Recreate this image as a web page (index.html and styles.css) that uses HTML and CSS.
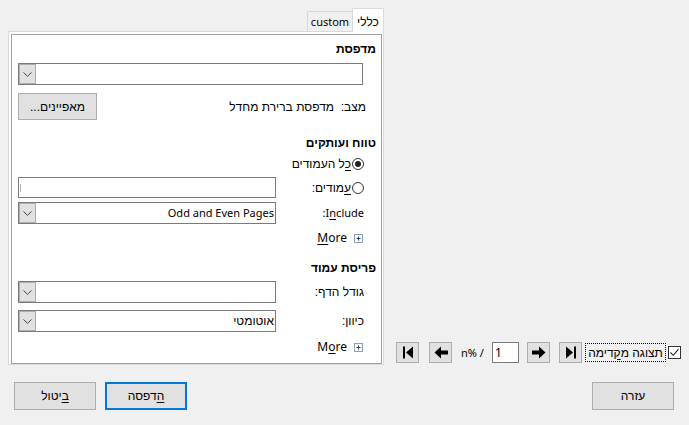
FILE: index.html
```html
<!DOCTYPE html>
<html lang="he" dir="rtl">
<head>
<meta charset="utf-8">
<title>הדפסה</title>
<link rel="stylesheet" href="styles.css">
</head>
<body>
<div class="dialog">
  <div class="main">
    <div class="preview">
      <span class="checkbox"><svg width="11" height="11" viewBox="0 0 11 11"><polyline points="1.5,5.5 4.3,8.3 9.5,2.2" fill="none" stroke="#222" stroke-width="1.1"/></svg></span>
      <span class="chk-label">תצוגה מ<u>ק</u>דימה</span>
      <span class="nav nav-last"><svg width="12" height="13" viewBox="0 0 12 13"><polygon points="1,0.5 8,6.5 1,12.5" fill="#000"/><rect x="9" y="0.5" width="2" height="12" fill="#000"/></svg></span>
      <span class="nav nav-next"><svg width="14" height="13" viewBox="0 0 14 13"><polygon points="0,4.5 7,4.5 7,0.5 13.5,6.5 7,12.5 7,8.5 0,8.5" fill="#000"/></svg></span>
      <span class="pagein lat">1</span>
      <span class="pagetotal lat" dir="ltr">n% /</span>
      <span class="nav nav-prev"><svg width="14" height="13" viewBox="0 0 14 13"><polygon points="14,4.5 7,4.5 7,0.5 0.5,6.5 7,12.5 7,8.5 14,8.5" fill="#000"/></svg></span>
      <span class="nav nav-first"><svg width="12" height="13" viewBox="0 0 12 13"><rect x="1" y="0.5" width="2" height="12" fill="#000"/><polygon points="11,0.5 4,6.5 11,12.5" fill="#000"/></svg></span>
    </div>
    <div class="tabs">
      <div class="tabbar">
        <div class="tab tab-active">כללי</div>
        <div class="tab tab-other lat">custom</div>
      </div>
      <div class="panel">
        <div class="frame">
          <div class="heading">מדפסת</div>
          <div class="combo combo-printer">
            <span class="combo-text"></span>
            <span class="drop"><svg width="9" height="5" viewBox="0 0 9 5"><polyline points="0.5,0.5 4.5,4.3 8.5,0.5" fill="none" stroke="#444" stroke-width="1"/></svg></span>
          </div>
          <div class="row status-row">
            <span class="status-text">מצב:&nbsp; מדפסת ברירת מחדל</span>
            <span class="btn btn-props">מאפיינים...</span>
          </div>
          <div class="heading heading-range">טווח ועותקים</div>
          <div class="indent">
            <div class="row radio-row radio-all">
              <span class="radio-wrap"><span class="radio radio-on"></span><span class="radio-text"><u>כ</u>ל העמודים</span></span>
            </div>
            <div class="row radio-row radio-pages">
              <span class="radio-wrap"><span class="radio"></span><span class="radio-text"><u>ע</u>מודים:</span></span>
              <span class="textbox"><span class="caret"></span></span>
            </div>
            <div class="row include-row">
              <span class="label lat">I<u>n</u>clude:</span>
              <span class="combo combo-short">
                <span class="combo-text lat"><span dir="ltr">Odd and Even Pages</span></span>
                <span class="drop"><svg width="9" height="5" viewBox="0 0 9 5"><polyline points="0.5,0.5 4.5,4.3 8.5,0.5" fill="none" stroke="#444" stroke-width="1"/></svg></span>
              </span>
            </div>
            <div class="row more-row more-1">
              <span class="expander"><svg width="9" height="9" viewBox="0 0 9 9"><rect x="0.5" y="0.5" width="8" height="8" fill="#fff" stroke="#8d9db4"/><path d="M4.5 2.5v4M2.5 4.5h4" stroke="#1f3f7a" stroke-width="1"/></svg></span>
              <span class="more-text lat" dir="ltr"><u>M</u>ore</span>
            </div>
          </div>
          <div class="heading heading-layout">פריסת עמוד</div>
          <div class="indent">
            <div class="row size-row">
              <span class="label">גודל הדף:</span>
              <span class="combo combo-short">
                <span class="combo-text"></span>
                <span class="drop"><svg width="9" height="5" viewBox="0 0 9 5"><polyline points="0.5,0.5 4.5,4.3 8.5,0.5" fill="none" stroke="#444" stroke-width="1"/></svg></span>
              </span>
            </div>
            <div class="row orient-row">
              <span class="label">כיוון:</span>
              <span class="combo combo-short">
                <span class="combo-text">אוטומטי</span>
                <span class="drop"><svg width="9" height="5" viewBox="0 0 9 5"><polyline points="0.5,0.5 4.5,4.3 8.5,0.5" fill="none" stroke="#444" stroke-width="1"/></svg></span>
              </span>
            </div>
            <div class="row more-row more-2">
              <span class="expander"><svg width="9" height="9" viewBox="0 0 9 9"><rect x="0.5" y="0.5" width="8" height="8" fill="#fff" stroke="#8d9db4"/><path d="M4.5 2.5v4M2.5 4.5h4" stroke="#1f3f7a" stroke-width="1"/></svg></span>
              <span class="more-text lat" dir="ltr">M<u>o</u>re</span>
            </div>
          </div>
        </div>
      </div>
    </div>
  </div>
  <div class="buttons">
    <span class="btn btn-big">עזרה</span>
    <span class="btn-group">
      <span class="btn btn-big btn-default"><u>ה</u>דפסה</span>
      <span class="btn btn-big"><u>ב</u>יטול</span>
    </span>
  </div>
</div>
</body>
</html>
```

FILE: styles.css
```css
* { box-sizing: border-box; }
html, body { margin: 0; padding: 0; }
body {
  background: #f0f0f0;
  font-family: "Liberation Sans", "DejaVu Sans", sans-serif;
  font-size: 12px;
  color: #000;
  width: 689px;
  height: 425px;
  overflow: hidden;
}
.lat { font-family: "Noto Sans", "Liberation Sans", sans-serif; font-size: 11px; }
u { text-decoration: underline; text-underline-offset: 2px; }

.dialog { display: flex; flex-direction: column; height: 425px; }

.main {
  display: flex;
  align-items: flex-end;
  padding: 8px 8px 0 8px;
  height: 365px;
}

/* preview navigation */
.preview {
  display: flex;
  align-items: center;
  margin-bottom: 2px;
  height: 21px;
}
.checkbox {
  width: 13px; height: 13px;
  border: 1px solid #333;
  background: #fff;
  display: flex; align-items: center; justify-content: center;
}
.chk-label {
  margin-right: 2px;
  border: 1px dotted #000;
  height: 19px;
  width: 81px;
  line-height: 16px;
  display: flex; align-items: center; justify-content: center;
}
.nav {
  width: 23px; height: 21px;
  background: #e1e1e1;
  border: 1px solid #adadad;
  display: flex; align-items: center; justify-content: center;
}
.nav-last { margin-right: 3px; }
.nav-next { margin-right: 9px; }
.pagein {
  margin-right: 8px;
  width: 27px; height: 21px;
  background: #fff;
  border: 1px solid #7a7a7a;
  direction: ltr;
  text-align: left;
  padding-left: 2px;
  line-height: 19px;
  font-size: 12px;
}
.pagetotal { margin-right: 6px; width: 25px; line-height: 16px; }
.nav-prev { margin-right: 9px; }
.nav-first { margin-right: 10px; }

/* tabs */
.tabs { margin-right: auto; width: 376px; }
.tabbar { display: flex; align-items: flex-end; height: 23px; }
.tab {
  border: 1px solid #d9d9d9;
  border-bottom: none;
  line-height: 16px;
  text-align: center;
}
.tab-active {
  width: 32px;
  height: 24px;
  margin-bottom: -1px;
  background: #fff;
  position: relative;
  z-index: 1;
  padding-top: 5px;
}
.tab-other {
  width: 45px;
  height: 20px;
  background: #f0f0f0;
  border-left: 1px solid #d9d9d9;
  border-right: none;
  padding-top: 2px;
}
.panel {
  border: 1px solid #d9d9d9;
  background: #fff;
  height: 334px;
  padding: 2px 1px 0 2px;
}
.frame {
  border: 1px solid #a0a0a0;
  height: 330px;
  padding: 6px 5px 0 6px;
}

.heading {
  font-weight: bold;
  line-height: 16px;
}
.heading-range { margin-top: 15px; }
.heading-layout { margin-top: 14px; }

.row {
  display: flex;
  align-items: center;
  justify-content: space-between;
}
.indent { margin-right: 12px; }

.combo {
  display: flex;
  height: 22px;
  border: 1px solid #7a7a7a;
  background: #fff;
}
.combo-printer { margin-top: 6px; margin-left: 0; margin-right: 13px; }
.combo-short { width: 258px; }
.combo-text {
  flex: 1;
  line-height: 20px;
  padding-right: 1px;
  white-space: nowrap;
  text-align: right;
}
.drop {
  width: 17px;
  background: #e1e1e1;
  border: 1px solid #adadad;
  margin: 0;
  display: flex; align-items: center; justify-content: center;
}

.btn {
  background: #e1e1e1;
  border: 1px solid #adadad;
  display: flex; align-items: center; justify-content: center;
}
.status-row { margin-top: 8px; height: 27px; margin-right: 10px; }
.btn-props { width: 79px; height: 27px; }

.radio-row { height: 16px; }
.radio-all { margin-top: 5px; }
.radio-pages { margin-top: 5px; height: 21px; }
.radio-wrap { display: flex; align-items: center; }
.radio {
  width: 12px; height: 12px;
  border: 1px solid #333;
  border-radius: 50%;
  background: #fff;
  display: flex; align-items: center; justify-content: center;
}
.radio-on::after {
  content: "";
  width: 6px; height: 6px;
  border-radius: 50%;
  background: #222;
}
.radio-text { margin-right: 1px; line-height: 16px; }
.textbox {
  width: 258px; height: 21px;
  border: 1px solid #7a7a7a;
  background: #fff;
  display: flex;
  align-items: center;
  justify-content: flex-end;
}
.caret { width: 1px; height: 8px; background: #b0b0b0; margin-left: 1px; }

.include-row { margin-top: 4px; height: 22px; }
.label { line-height: 16px; }

.more-row { margin-top: 6px; height: 16px; justify-content: flex-start; }
.more-2 { margin-top: 7px; }
.expander { display: flex; margin-right: 1px; }
.more-text { margin-right: 7px; line-height: 16px; font-size: 12px; }

.size-row { margin-top: 5px; height: 22px; }
.orient-row { margin-top: 7px; height: 22px; }

/* bottom buttons */
.buttons {
  display: flex;
  justify-content: space-between;
  align-items: flex-start;
  padding: 17px 15px 0 14px;
}
.btn-group { display: flex; gap: 9px; }
.btn-big { width: 82px; height: 28px; }
.btn-default { border: 2px solid #0078d7; }
```
